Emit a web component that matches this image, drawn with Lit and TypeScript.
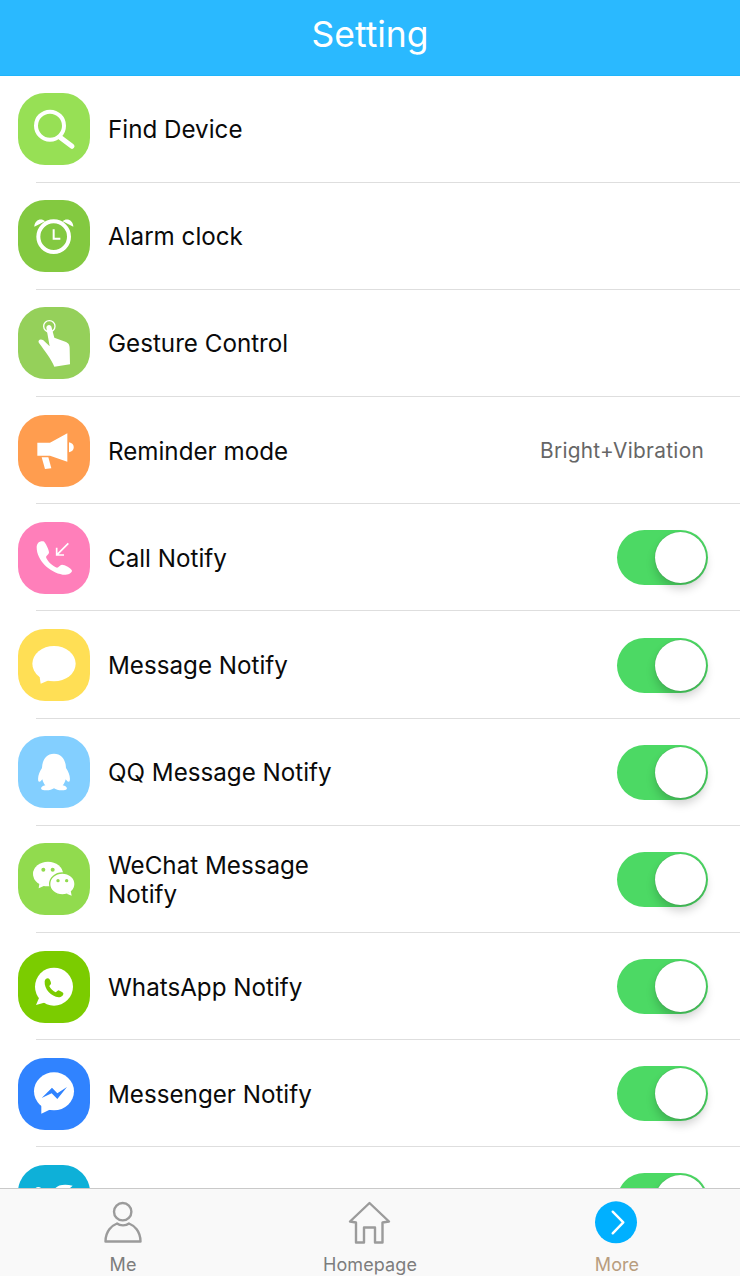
import { LitElement, html, css, svg } from "lit";
import { customElement } from "lit/decorators.js";

const W = "#fff";
const icons: Record<string, any> = {
  find: { c: "#97e055", top: 280, x: svg`<circle cx="150" cy="378" r="42" fill="none" stroke="${W}" stroke-width="12"/><path d="M182 414L216 440" stroke="${W}" stroke-width="15" stroke-linecap="round"/>` },
  alarm: { c: "#83c940", top: 600, x: svg`<circle cx="161" cy="710" r="46" fill="none" stroke="${W}" stroke-width="12"/><path d="M161 688V716H181" fill="none" stroke="${W}" stroke-width="6"/><path d="M103 680C103 660 124 652 135 664ZM220 680C220 660 199 652 188 664Z" fill="${W}"/>` },
  gesture: { c: "#95d05a", top: 22, x: svg`<circle cx="148" cy="80" r="17" fill="none" stroke="${W}" stroke-width="4"/><path d="M139 84C140 73 154 73 155 84L163 114L196 126C206 130 209 136 209 146L210 194L163 201C155 180 135 155 117 130C112 122 122 116 130 122L149 140Z" fill="${W}"/>` },
  remind: { c: "#ff9d4f", top: 345, x: svg`<path d="M112 428H150L202 400V485L150 467H112Z" fill="${W}"/><path d="M207 427C226 430 226 454 207 457Z" fill="${W}"/><path d="M125 472L145 472L154 505L135 507Z" fill="${W}"/>` },
  call: { c: "#ff7fba", top: 666, x: svg`<path d="M110 742C110 728 120 722 130 724C136 726 148 752 147 758C146 764 139 766 138 771C142 784 158 799 171 803C176 802 180 794 186 794C194 794 214 804 216 812C216 820 200 826 188 824C150 818 110 782 110 742Z" fill="${W}"/><path d="M205 730L172 763M170 743V765H192" fill="none" stroke="${W}" stroke-width="5"/>` },
  msg: { c: "#ffdf55", top: 28, x: svg`<ellipse cx="162" cy="132" rx="65" ry="53" fill="${W}"/><path d="M118 165L122 192L150 180Z" fill="${W}"/>` },
  qq: { c: "#83cfff", top: 350, x: svg`<path d="M162 403C186 403 197 422 198 446C206 458 212 472 209 486C204 490 200 484 197 480C195 488 192 494 188 498C200 500 204 508 198 511C186 515 170 513 162 507C154 513 138 515 126 511C120 508 124 500 136 498C132 494 129 488 127 480C124 484 120 490 115 486C112 472 118 458 126 446C127 422 138 403 162 403Z" fill="${W}"/>` },
  wechat: { c: "#91db4e", top: 672, x: svg`<ellipse cx="144" cy="765" rx="45" ry="37" fill="${W}"/><path d="M118 795L116 808L138 798Z" fill="${W}"/><ellipse cx="187" cy="795" rx="38" ry="33" fill="${W}" stroke="#91db4e" stroke-width="4"/><path d="M200 824L215 830L212 815Z" fill="${W}"/><g fill="#91db4e"><circle cx="130" cy="752" r="6"/><circle cx="158" cy="752" r="6"/><circle cx="174" cy="785" r="5"/><circle cx="200" cy="785" r="5"/></g>` },
  whats: { c: "#7bcc00", top: 33, x: svg`<circle cx="162" cy="140" r="57" fill="${W}"/><path d="M118 172L108 195L140 186Z" fill="${W}"/><path d="M134 124C135 116 144 112 148 117C150 120 154 128 153 131C152 134 148 136 148 139C151 146 160 154 167 157C170 156 172 152 175 151C179 152 188 156 190 160C191 166 184 172 176 172C154 170 132 148 134 124Z" fill="#7bcc00"/>` },
  messenger: { c: "#3083ff", top: 355, x: svg`<ellipse cx="162" cy="455" rx="60" ry="57" fill="${W}"/><path d="M124 495V522L152 509Z" fill="${W}"/><path d="M125 475L156 444L172 461L201 442L172 478L155 461Z" fill="#3083ff"/>` },
  skype: { c: "#0eb0d8", top: 677, x: svg`<path d="M105 748C110 741 120 742 126 748ZM165 748C172 736 195 733 218 739L208 748Z" fill="${W}"/>` },
};

function icon(k: string) {
  const i = icons[k];
  return html`<svg class="ic" viewBox="54 ${i.top} 216 216" style="background:${i.c}">${i.x}</svg>`;
}

const rows: [string, string, string?][] = [
  ["find", "Find Device"],
  ["alarm", "Alarm clock"],
  ["gesture", "Gesture Control"],
  ["remind", "Reminder mode", "val"],
  ["call", "Call Notify", "on"],
  ["msg", "Message Notify", "on"],
  ["qq", "QQ Message Notify", "on"],
  ["wechat", "WeChat Message Notify", "on"],
  ["whats", "WhatsApp Notify", "on"],
  ["messenger", "Messenger Notify", "on"],
  ["skype", "", "on"],
];

@customElement("app-root")
export class AppRoot extends LitElement {
  static styles = css`
    :host { display: flex; flex-direction: column; width: 740px; height: 1276px; overflow: hidden; background: #fff;
      font-family: Inter, "Liberation Sans", sans-serif; color: #0a0a0a; }
    .head { flex: none; height: 75.5px; box-sizing: border-box; background: #2ab9ff; border-bottom: 1px solid #1fb4fa; color: #fff;
      display: flex; align-items: center; justify-content: center; font-size: 35.5px; padding-bottom: 5px; }
    .list { flex: 1; min-height: 0; overflow: hidden; }
    .row { position: relative; height: 107.2px; box-sizing: border-box; display: flex; align-items: center; padding: 0 32px 0 18px; }
    .row::after { content: ""; position: absolute; left: 36px; right: 0; bottom: 0; height: 1px; background: #dedede; }
    .ic { flex: none; width: 72px; height: 72px; border-radius: 27px; display: block; margin-right: 18px; }
    .label { flex: 1; font-size: 24.2px; line-height: 29px; max-width: 240px; padding-top: 1px; }
    .label.wide { max-width: none; white-space: nowrap; }
    .val { margin-left: auto; font-size: 20.8px; color: #666; padding-right: 4px; letter-spacing: .3px; }
    .sw { flex: none; margin-left: auto; position: relative; width: 91px; height: 55px; border-radius: 28px; background: #4cd964; }
    .sw::after { content: ""; position: absolute; right: 2px; top: 2px; width: 51px; height: 51px; border-radius: 50%; background: #fff;
      box-shadow: 0 6px 10px rgba(0,0,0,.18), 0 0 1px rgba(0,0,0,.3); }
    .tabs { flex: none; height: 88px; box-sizing: border-box; border-top: 1px solid #c9c9c9; background: #f9f9f9; display: grid; grid-template-columns: 246px 248px 246px; }
    .tab { display: flex; flex-direction: column; align-items: center; font-size: 18px; color: #7d7d7d; padding-top: 12px; letter-spacing: .1px; }
    .tab svg { width: 44px; height: 44px; display: block; margin-bottom: 9px; }
    .tab.on { color: #b89d7e; }
  `;

  render() {
    return html`
      <div class="head">Setting</div>
      <div class="list">
        ${rows.map(([k, t, r]) => html`<div class="row">
          ${icon(k)}
          <div class="label ${t.length < 20 ? "wide" : ""}">${t}</div>
          ${r === "val" ? html`<div class="val">Bright+Vibration</div>` : r === "on" ? html`<div class="sw"></div>` : ""}
        </div>`)}
      </div>
      <div class="tabs">
        <div class="tab">
          <svg viewBox="0 0 44 44" fill="none" stroke="#9b9b9b" stroke-width="2.4"><circle cx="21.700" cy="10.700" r="8.700"/><path d="M4.500 40.500C4.500 30 11 24.500 16 22.500C19 25 25 25 28 22.500C33 24.500 39.500 30 39.500 40.500Z" stroke-linejoin="round"/></svg>
          Me
        </div>
        <div class="tab">
          <svg viewBox="0 0 44 44" fill="none" stroke="#9b9b9b" stroke-width="2.4" stroke-linejoin="round"><path d="M21.500 2L41 20.500L34.500 21.500V41.500H27V26.500H16V41.500H8V21.500L2 20.500Z"/></svg>
          Homepage
        </div>
        <div class="tab on">
          <svg viewBox="0 0 44 44"><circle cx="21" cy="21.300" r="21" fill="#00b0ff"/><path d="M17.700 10.700L28.300 21.300L17.700 32.300" fill="none" stroke="#fff" stroke-width="2.400" stroke-linecap="round" stroke-linejoin="round"/></svg>
          More
        </div>
      </div>
    `;
  }
}
